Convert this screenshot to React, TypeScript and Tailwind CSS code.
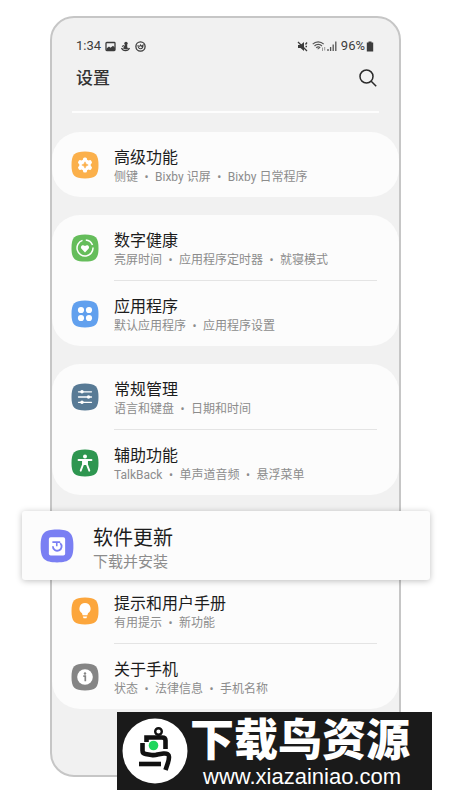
import type { ReactNode } from "react";

type RowProps = {
  icon: ReactNode;
  color: string;
  title: string;
  details: string[];
};

function Squircle({ color, size, children }: { color: string; size: string; children: ReactNode }) {
  return (
    <svg viewBox="0 0 28 28" className={`shrink-0 ${size}`} aria-hidden="true">
      <path d="M14 .5C24.5.5 27.5 3.500 27.500 14S24.500 27.500 14 27.500.5 24.500.5 14 3.500.5 14 .5Z" fill={color} />
      {children}
    </svg>
  );
}

function Row({ icon, color, title, details }: RowProps) {
  return (
    <li className="group">
      <a href="#" className="flex h-[65px] items-center gap-[15px] pl-[19px]">
        <Squircle color={color} size="size-7">
          {icon}
        </Squircle>
        <span className="flex flex-col pt-[3px]">
          <span className="text-[16px] leading-[22px] text-[#1c1c1c]">{title}</span>
          <span className="flex text-[12px] leading-4 text-[#8c8c8c]">
            {details.map((detail, i) => (
              <span key={detail} className="flex whitespace-nowrap">
                {i > 0 && <span className="w-[17px] text-center">•</span>}
                {detail}
              </span>
            ))}
          </span>
        </span>
      </a>
      <div className="ml-[62px] mr-[22px] h-px bg-[#e4e4e4] group-last:hidden" />
    </li>
  );
}

function Group({ children }: { children: ReactNode }) {
  return <ul className="rounded-[28px] bg-[#fcfcfc]">{children}</ul>;
}

const gear = (
  <g>
    <g fill="#fff">
      <circle cx="14" cy="14" r="5.800" />
      <rect x="12" y="6.500" width="4" height="15" rx="1.500" />
      <rect x="12" y="6.500" width="4" height="15" rx="1.500" transform="rotate(60 14 14)" />
      <rect x="12" y="6.500" width="4" height="15" rx="1.500" transform="rotate(120 14 14)" />
    </g>
    <path d="M14 10.800 15 13l2.200 1-2.200 1-1 2.200-1-2.200-2.200-1 2.200-1Z" fill="#fbb04b" stroke="#fbb04b" strokeWidth=".6" />
  </g>
);

const wellbeing = (
  <g>
    <path d="M14.800 6A8 8 0 0 1 21.500 11M22 13.500A8 8 0 1 1 11.500 6.400" fill="none" stroke="#fff" strokeWidth="1.500" />
    <path d="m14 18.400-3.500-3.600c-1.800-2 .9-5 3.500-2.700 2.600-2.300 5.300.7 3.500 2.700Z" fill="#fff" />
  </g>
);

const apps = (
  <g fill="#fff">
    <circle cx="10" cy="10" r="3.100" />
    <circle cx="18" cy="10" r="3.100" />
    <circle cx="10" cy="18" r="3.100" />
    <circle cx="18" cy="18" r="3.100" />
  </g>
);

const sliders = (
  <g fill="#fff" stroke="#fff" strokeWidth="1.300" strokeLinecap="round">
    <path d="M7.500 8.800h13M7.500 14h13M7.500 19.300h13" />
    <circle cx="11" cy="8.800" r="1.100" />
    <circle cx="17.500" cy="14" r="1.100" />
    <circle cx="11" cy="19.300" r="1.100" />
  </g>
);

const person = (
  <g>
    <circle cx="14" cy="7.500" r="2" fill="#fff" />
    <path d="M7.500 11H20.500" stroke="#fff" strokeWidth="1.800" strokeLinecap="round" />
    <path d="M12 11h4v4.500l2.300 6.200M12 11v4.500l-2.300 6.200" fill="none" stroke="#fff" strokeWidth="1.900" strokeLinecap="round" />
    <path d="M12 11h4v5h-4Z" fill="#fff" />
  </g>
);

const bulb = (
  <g fill="#fff">
    <path d="M14 6a5.600 5.600 0 0 0-3 10.300l.6 2h4.800l.6-2A5.600 5.600 0 0 0 14 6Z" />
    <path d="M11.800 19.500h4.400l-.8 1.800h-2.800Z" />
  </g>
);

const info = (
  <g>
    <circle cx="14" cy="14" r="7.800" fill="#fff" />
    <circle cx="14" cy="10.500" r="1.200" fill="#858585" />
    <path d="M12.300 13.200h2v5" fill="none" stroke="#858585" strokeWidth="1.700" />
  </g>
);

function StatusBar() {
  return (
    <div className="flex h-4 items-center justify-between pl-6 pr-[25px] text-[13px] text-[#3c3c3c]">
      <div className="flex items-center gap-1">
        <span>1:34</span>
        <svg viewBox="0 0 11 11" className="size-[11px]" aria-hidden="true">
          <rect x="1" y="1.500" width="9" height="8" rx=".8" fill="none" stroke="#3c3c3c" strokeWidth="1.300" />
          <path d="M1.500 9V7.500L4 5.500l1.500 1.300L8 4.800l2 2V9Z" fill="#3c3c3c" />
        </svg>
        <svg viewBox="0 0 11 11" className="size-[11px]" aria-hidden="true">
          <circle cx="6" cy="2.500" r="1.700" fill="#3c3c3c" />
          <path d="M4.800 4h2.400v2.500L9 7.300 6 8.500l-3-1Z" fill="#3c3c3c" />
          <path d="M1.500 7c1.500 3.500 6.500 3.500 8 0M2 5.500l2-1" fill="none" stroke="#3c3c3c" strokeWidth="1.200" />
        </svg>
        <svg viewBox="0 0 11 11" className="size-[11px]" aria-hidden="true" fill="none" stroke="#3c3c3c">
          <circle cx="5.500" cy="5.500" r="4.600" strokeWidth="1.300" />
          <path d="M3 4c0 5 5 5 5 0L6.800 5.500 5.500 4 4.500 5.800" strokeWidth="1.100" />
        </svg>
      </div>
      <div className="flex items-center">
        <svg viewBox="0 0 11 11" className="mr-1 size-[11px]" aria-hidden="true">
          <path d="M1 4h2.500L7 1v9L3.500 7H1Z" fill="#3c3c3c" />
          <path d="m1 1 9 9M8.500 3.500l1.500-2M8.500 5.500H10" stroke="#3c3c3c" strokeWidth="1.300" />
        </svg>
        <svg viewBox="0 0 14 12" className="h-3 w-3.500" aria-hidden="true" fill="none" stroke="#555">
          <path d="M.7 4.200c3-3.200 8-3.200 11 0M2.500 6c2-2.200 5.500-2.200 7.400 0M4.200 7.800c1.200-1.200 2.800-1.200 4 0" strokeWidth="1.200" />
          <path d="m6.200 8.200.5.800" strokeWidth="2" />
          <path d="M10.500 7.500v3.500M12.700 7v3.500" stroke="#999" />
        </svg>
        <svg viewBox="0 0 10 10" className="ml-px size-2.5" aria-hidden="true" stroke="#555" strokeWidth="1.300">
          <path d="M1 10V8M3.600 10V6M6.200 10V3.500M8.800 10V.5" />
        </svg>
        <span className="ml-1">96%</span>
        <svg viewBox="0 0 8 11" className="ml-px h-[11px] w-2" aria-hidden="true">
          <path d="M2.500.5h3v1h1.700v9H.8v-9h1.700Z" fill="#3c3c3c" />
        </svg>
      </div>
    </div>
  );
}

function UpdateCard() {
  return (
    <a
      href="#"
      className="relative -ml-[30px] -mr-[31px] flex h-[69px] items-center gap-[19px] rounded-[3px] bg-[#fcfcfc] pl-[18px] shadow-[0_1px_6px_rgba(0,0,0,0.25)]"
    >
      <Squircle color="#7a7ff3" size="size-[34px]">
        <rect x="7.300" y="6.800" width="13.400" height="15" rx="1.500" fill="#fff" />
        <path d="M10.600 14.200A3.600 3.600 0 1 0 16.600 11.600" fill="none" stroke="#7a7ff3" strokeWidth="1.500" />
        <path d="M10.200 10.800h6.400M13.800 10.800v3.400" fill="none" stroke="#7a7ff3" strokeWidth="1.300" />
      </Squircle>
      <span className="flex flex-col pt-[5px]">
        <span className="text-[20px] leading-[27px] text-[#1c1c1c]">软件更新</span>
        <span className="text-[15px] leading-5 text-[#8c8c8c]">下载并安装</span>
      </span>
    </a>
  );
}

function Watermark() {
  return (
    <div className="absolute right-[18px] top-[712px] flex h-[78px] w-[315px] items-center gap-0.5 bg-[#1a1a1a] pl-[5px] text-white">
      <svg viewBox="0 0 66 66" className="size-[66px] shrink-0" aria-hidden="true">
        <circle cx="33" cy="33" r="32.500" fill="#fff" />
        <g fill="none" stroke="#111" strokeWidth="4.600">
          <circle cx="36.500" cy="13.500" r="3.300" strokeWidth="2.400" />
          <path d="M24.500 24v-4.500H40q3.500 0 3.500 3V31" />
          <path d="M20.500 25v7.500q0 3 3 3.500l6 1q3 .5 6-.5l6-1q5.500-.5 5.500 3.500 0 3-1.500 7l-2 6" />
          <path d="M17 46h22" />
        </g>
        <circle cx="31.500" cy="27.500" r="4.800" fill="#1fd65c" />
      </svg>
      <div className="flex flex-col pt-1 font-['Liberation_Sans','Noto_Sans_CJK_SC',sans-serif]">
        <span className="whitespace-nowrap text-[44px] font-black leading-[48px]">下载鸟资源</span>
        <a href="#" className="pl-[13px] text-[22px] leading-6">
          www.xiazainiao.com
        </a>
      </div>
    </div>
  );
}

export default function App() {
  return (
    <div className="relative min-h-screen overflow-hidden bg-white pb-6 pl-[50px] pr-[49px] pt-4 font-[Roboto,'Noto_Sans_CJK_SC',sans-serif]">
      <main className="rounded-[24px] border-2 border-[#c6c6c6] bg-[#f1f1f1] pb-[66px] pt-[20px]">
        <header>
          <StatusBar />
          <div className="mt-2.5 flex items-center justify-between pl-6 pr-[21px]">
            <h1 className="text-[17px] font-medium leading-[28px] text-[#333]">设置</h1>
            <button type="button" aria-label="搜索">
              <svg viewBox="0 0 20 20" className="size-5" fill="none" stroke="#2a2a2a" strokeWidth="1.500" aria-hidden="true">
                <circle cx="8.500" cy="8.500" r="6.500" />
                <path d="m13.200 13.200 5 5" />
              </svg>
            </button>
          </div>
          <div className="mx-5 mt-[19px] h-0.5 bg-[#fdfdfd]" />
        </header>

        {/* settings groups */}
        <div className="mt-[19px] flex flex-col gap-[18px]">
          <Group>
            <Row icon={gear} color="#fbb04b" title="高级功能" details={["侧键", "Bixby 识屏", "Bixby 日常程序"]} />
          </Group>
          <Group>
            <Row icon={wellbeing} color="#65bd5b" title="数字健康" details={["亮屏时间", "应用程序定时器", "就寝模式"]} />
            <Row icon={apps} color="#61a0ee" title="应用程序" details={["默认应用程序", "应用程序设置"]} />
          </Group>
          <Group>
            <Row icon={sliders} color="#587a95" title="常规管理" details={["语言和键盘", "日期和时间"]} />
            <Row icon={person} color="#2e9650" title="辅助功能" details={["TalkBack", "单声道音频", "悬浮菜单"]} />
          </Group>
        </div>

        {/* highlighted update entry and the rest of its group */}
        <div className="mt-4">
          <UpdateCard />
          <ul className="-mt-0.5 rounded-b-[28px] bg-[#fcfcfc]">
            <Row icon={bulb} color="#fca63c" title="提示和用户手册" details={["有用提示", "新功能"]} />
            <Row icon={info} color="#858585" title="关于手机" details={["状态", "法律信息", "手机名称"]} />
          </ul>
        </div>
      </main>
      <Watermark />
    </div>
  );
}
